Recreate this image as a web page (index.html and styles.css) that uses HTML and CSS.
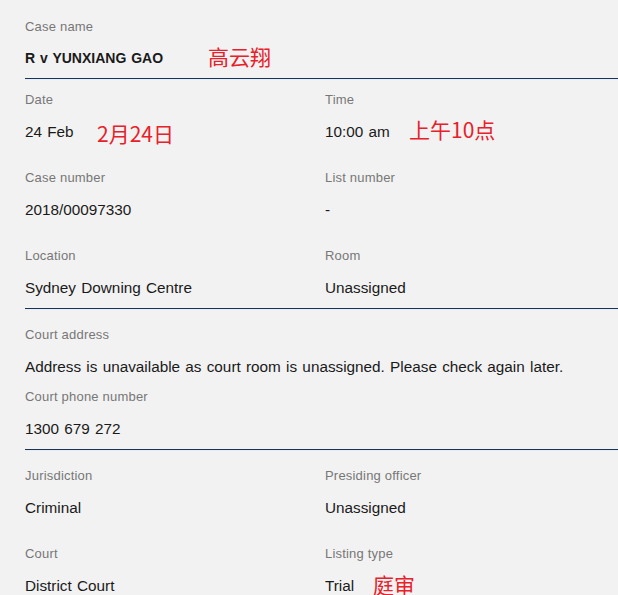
FILE: index.html
```html
<!DOCTYPE html>
<html>
<head>
<meta charset="utf-8">
<link rel="stylesheet" href="styles.css">
</head>
<body>
<div class="page">
  <section class="section first">
    <div class="field">
      <div class="label">Case name</div>
      <div class="value bold">R v YUNXIANG GAO<span class="note note-name">高云翔</span></div>
    </div>
  </section>
  <section class="section grid">
    <div class="field">
      <div class="label">Date</div>
      <div class="value">24 Feb<span class="note note-date">2月24日</span></div>
    </div>
    <div class="field">
      <div class="label">Time</div>
      <div class="value">10:00 am<span class="note note-time">上午10点</span></div>
    </div>
    <div class="field">
      <div class="label">Case number</div>
      <div class="value">2018/00097330</div>
    </div>
    <div class="field">
      <div class="label">List number</div>
      <div class="value">-</div>
    </div>
    <div class="field">
      <div class="label">Location</div>
      <div class="value">Sydney Downing Centre</div>
    </div>
    <div class="field">
      <div class="label">Room</div>
      <div class="value">Unassigned</div>
    </div>
  </section>
  <section class="section address">
    <div class="field">
      <div class="label">Court address</div>
      <div class="value">Address is unavailable as court room is unassigned. Please check again later.</div>
    </div>
    <div class="field">
      <div class="label">Court phone number</div>
      <div class="value">1300 679 272</div>
    </div>
  </section>
  <section class="section grid last">
    <div class="field">
      <div class="label">Jurisdiction</div>
      <div class="value">Criminal</div>
    </div>
    <div class="field">
      <div class="label">Presiding officer</div>
      <div class="value">Unassigned</div>
    </div>
    <div class="field">
      <div class="label">Court</div>
      <div class="value">District Court</div>
    </div>
    <div class="field">
      <div class="label">Listing type</div>
      <div class="value">Trial<span class="note note-trial">庭审</span></div>
    </div>
  </section>
</div>
</body>
</html>
```

FILE: styles.css
```css
html, body {
  margin: 0;
  padding: 0;
  background: #f2f2f2;
}
body {
  font-family: "Liberation Sans", Arial, sans-serif;
  color: #1a1a1a;
  overflow: hidden;
}
.page {
  padding-left: 25px;
}
.section {
  border-bottom: 1px solid #1b3352;
  box-shadow: 0 1px 0 #e3eef8;
  padding: 12px 0 11px 0;
}
.section.first {
  padding-top: 18px;
}
.section.address {
  padding-top: 17px;
  padding-bottom: 11px;
  display: flex;
  flex-direction: column;
  gap: 12px;
}
.section.last {
  padding-top: 17px;
  border-bottom: none;
  box-shadow: none;
}
.grid {
  display: grid;
  grid-template-columns: 300px 1fr;
  row-gap: 28px;
}
.field {
  display: flex;
  flex-direction: column;
  gap: 14px;
}
.first .field {
  gap: 13px;
}
.label {
  font-size: 13px;
  line-height: 18px;
  letter-spacing: 0.2px;
  color: #777777;
}
.value {
  position: relative;
  font-size: 15.3px;
  line-height: 18px;
  word-spacing: 1px;
  color: #1a1a1a;
}
.value.bold {
  font-weight: bold;
  font-size: 14px;
  word-spacing: 1px;
}
.note {
  position: absolute;
  font-family: "Noto Sans CJK SC", sans-serif;
  font-size: 21px;
  line-height: 24px;
  color: #e8202a;
  font-weight: normal;
  word-spacing: 0;
  white-space: nowrap;
}
.note-name { left: 183px; top: -5px; }
.note-date { left: 72px; top: -2px; }
.note-time { left: 84px; top: -6px; }
.note-trial { left: 48px; top: -5px; }
```
